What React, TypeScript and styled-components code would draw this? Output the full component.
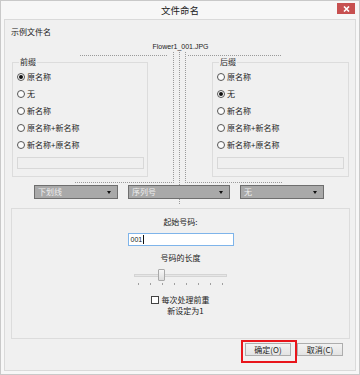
import React from "react";
import styled, { createGlobalStyle } from "styled-components";

const GlobalStyle = createGlobalStyle`
  html, body { margin: 0; padding: 0; background: #ffffff; }
  body { font-family: "Noto Sans CJK SC", "Noto Sans", sans-serif; }
  * { box-sizing: border-box; }
`;

const Window = styled.div`
  width: 360px;
  height: 375px;
  border: 1px solid #c9c9c9;
  background: #f7f7f7;
  display: flex;
  flex-direction: column;
  color: #222;
  font-size: 8px;
`;

const TitleBar = styled.div`
  height: 17px;
  display: grid;
  grid-template-columns: 1fr auto 1fr;
  align-items: start;
`;

const Title = styled.div`
  grid-column: 2;
  font-size: 9.5px;
  line-height: 18px;
  color: #222;
`;

const CloseButton = styled.div`
  grid-column: 3;
  justify-self: end;
  width: 18px;
  height: 11px;
  margin: 2px 4px 0 0;
  background: #c75050;
  display: flex;
  align-items: center;
  justify-content: center;
`;

const Frame = styled.div`
  flex: 1;
  margin: 1px 3px 3px;
  border: 1px solid #dadada;
  background: #f0f0f0;
  display: flex;
  flex-direction: column;
`;

const SampleSection = styled.div`
  position: relative;
  padding: 0 6px 0 7px;
`;

const Connectors = styled.svg`
  position: absolute;
  left: 0;
  top: 0;
  pointer-events: none;
`;

const SectionLabel = styled.div`
  padding-top: 5px;
  margin-left: -1px;
  line-height: 13px;
`;

const FileName = styled.div`
  margin-top: 3px;
  text-align: center;
  font-family: "Liberation Sans", Arial, sans-serif;
  font-size: 7px;
  line-height: 11px;
`;

const GroupRow = styled.div`
  margin-top: 4px;
  display: flex;
  justify-content: space-between;
`;

const GroupBox = styled.fieldset<{ $w: number }>`
  width: ${(p) => p.$w}px;
  margin: 0;
  padding: 0 3px 7px 4px;
  border: 1px solid #dcdcdc;
  min-inline-size: 0;
`;

const Legend = styled.legend`
  padding: 0 1px;
  margin-left: 2px;
  line-height: 12px;
  font-size: 8px;
`;

const RadioRow = styled.div`
  display: flex;
  align-items: center;
  gap: 2px;
  height: 17px;
  white-space: nowrap;
`;

const RadioDot = styled.span<{ $checked?: boolean }>`
  width: 8px;
  height: 8px;
  border-radius: 50%;
  border: 1px solid #555;
  background: #fcfcfc;
  display: flex;
  align-items: center;
  justify-content: center;
  &::after {
    content: "";
    width: 4px;
    height: 4px;
    border-radius: 50%;
    background: #111;
    display: ${(p) => (p.$checked ? "block" : "none")};
  }
`;

const DisabledField = styled.div`
  margin-top: 4px;
  width: 127px;
  height: 12px;
  border: 1px solid #d8d8d8;
  background: #efefef;
`;

const ComboRow = styled.div`
  margin-top: 8px;
  padding-left: 22px;
  display: flex;
  gap: 10px;
`;

const Combo = styled.div<{ $w: number }>`
  position: relative;
  width: ${(p) => p.$w}px;
  height: 14px;
  background: #a9a9a9;
  border: 1px solid #6e6e6e;
  display: flex;
  align-items: center;
  justify-content: space-between;
  padding: 0 6px 0 3px;
  color: #eeeeee;
  font-size: 8px;
  line-height: 12px;
`;

const ComboArrow = styled.span`
  width: 0;
  height: 0;
  border-left: 2.5px solid transparent;
  border-right: 2.5px solid transparent;
  border-top: 3px solid #111;
`;

const NumberPanel = styled.div`
  height: 131px;
  margin: 9px 5px 0 6px;
  border: 1px solid #dcdcdc;
  display: flex;
  flex-direction: column;
  align-items: center;
  padding-top: 7px;
`;

const PanelText = styled.div<{ $mt?: number }>`
  margin-top: ${(p) => p.$mt ?? 0}px;
  line-height: 12px;
`;

const NumberInput = styled.div`
  margin-top: 5px;
  width: 106px;
  height: 13px;
  border: 1px solid #7eb4ea;
  background: #fff;
  display: flex;
  align-items: center;
  padding-left: 2px;
  font-family: "Liberation Sans", Arial, sans-serif;
  font-size: 7px;
`;

const Caret = styled.span`
  width: 1px;
  height: 9px;
  background: #111;
  margin-left: 1px;
`;

const Slider = styled.div`
  position: relative;
  margin-top: 2px;
  width: 93px;
  height: 23px;
`;

const Track = styled.div`
  margin-top: 8px;
  height: 3px;
  border: 1px solid #d4d4d4;
  background: #e6e6e6;
`;

const Thumb = styled.div`
  position: absolute;
  left: 24px;
  top: 3px;
  width: 7px;
  height: 12px;
  border: 1px solid #a9a9a9;
  border-radius: 1px;
  background: linear-gradient(#f7f7f7, #dddddd);
`;

const Ticks = styled.div`
  margin-top: 6px;
  padding: 0 4px;
  display: flex;
  justify-content: space-between;
`;

const Tick = styled.span`
  width: 1px;
  height: 2px;
  background: #a0a0a0;
`;

const CheckRow = styled.div`
  margin-top: 5px;
  display: flex;
  align-items: flex-start;
  gap: 2px;
`;

const CheckBox = styled.span`
  margin-top: 2px;
  width: 8px;
  height: 8px;
  border: 1px solid #444;
  background: #fff;
`;

const CheckText = styled.div`
  width: 50px;
  text-align: center;
  line-height: 11px;
`;

const ButtonRow = styled.div`
  margin-top: 1px;
  padding-right: 12px;
  display: flex;
  justify-content: flex-end;
  align-items: flex-start;
`;

const Highlight = styled.div`
  border: 2px solid #e8151b;
  padding: 1px 4px 5px 2px;
`;

const Button = styled.div<{ $offset?: number }>`
  margin-top: ${(p) => p.$offset ?? 0}px;
  width: 46px;
  height: 13px;
  border: 1px solid #adadad;
  background: linear-gradient(#f2f2f2, #e3e3e3);
  display: flex;
  align-items: center;
  justify-content: center;
  font-size: 8px;
`;

const prefixOptions = ["原名称", "无", "新名称", "原名称+新名称", "新名称+原名称"];

function Group({ title, checked, w }: { title: string; checked: number; w: number }) {
  return (
    <GroupBox $w={w}>
      <Legend>{title}</Legend>
      {prefixOptions.map((o, i) => (
        <RadioRow key={o}>
          <RadioDot $checked={i === checked} />
          {o}
        </RadioRow>
      ))}
      <DisabledField />
    </GroupBox>
  );
}

export default function App() {
  const dot = { stroke: "#9a9a9a", strokeWidth: 1, strokeDasharray: "1 1" };
  return (
    <>
      <GlobalStyle />
      <Window>
        <TitleBar>
          <Title>文件命名</Title>
          <CloseButton>
            <svg width="7" height="6" viewBox="0 0 7 6">
              <path d="M1 0.5 L6 5.5 M6 0.5 L1 5.5" stroke="#fff" strokeWidth="1.6" />
            </svg>
          </CloseButton>
        </TitleBar>
        <Frame>
          <SampleSection>
            <Connectors width="350" height="190">
              <line x1="75" y1="35.5" x2="162" y2="35.5" {...dot} />
              <line x1="183" y1="35.5" x2="277" y2="35.5" {...dot} />
              <line x1="168.5" y1="32" x2="168.5" y2="163" {...dot} />
              <line x1="174.5" y1="32" x2="174.5" y2="165" {...dot} />
              <line x1="174.5" y1="179" x2="174.5" y2="184" {...dot} />
              <line x1="180.5" y1="32" x2="180.5" y2="163" {...dot} />
              <line x1="70" y1="162.5" x2="168" y2="162.5" {...dot} />
              <line x1="180" y1="162.5" x2="278" y2="162.5" {...dot} />
            </Connectors>
            <SectionLabel>示例文件名</SectionLabel>
            <FileName>Flower1_001.JPG</FileName>
            <GroupRow>
              <Group title="前缀" checked={0} w={136} />
              <Group title="后缀" checked={1} w={137} />
            </GroupRow>
            <ComboRow>
              <Combo $w={84}>
                下划线
                <ComboArrow />
              </Combo>
              <Combo $w={102}>
                序列号
                <ComboArrow />
              </Combo>
              <Combo $w={84}>
                无
                <ComboArrow />
              </Combo>
            </ComboRow>
          </SampleSection>
          <NumberPanel>
            <PanelText>起始号码:</PanelText>
            <NumberInput>
              001
              <Caret />
            </NumberInput>
            <PanelText $mt={6}>号码的长度</PanelText>
            <Slider>
              <Track />
              <Thumb />
              <Ticks>
                {Array.from({ length: 8 }).map((_, i) => (
                  <Tick key={i} />
                ))}
              </Ticks>
            </Slider>
            <CheckRow>
              <CheckBox />
              <CheckText>每次处理前重新设定为1</CheckText>
            </CheckRow>
          </NumberPanel>
          <ButtonRow>
            <Highlight>
              <Button>确定(O)</Button>
            </Highlight>
            <Button $offset={3}>取消(C)</Button>
          </ButtonRow>
        </Frame>
      </Window>
    </>
  );
}
